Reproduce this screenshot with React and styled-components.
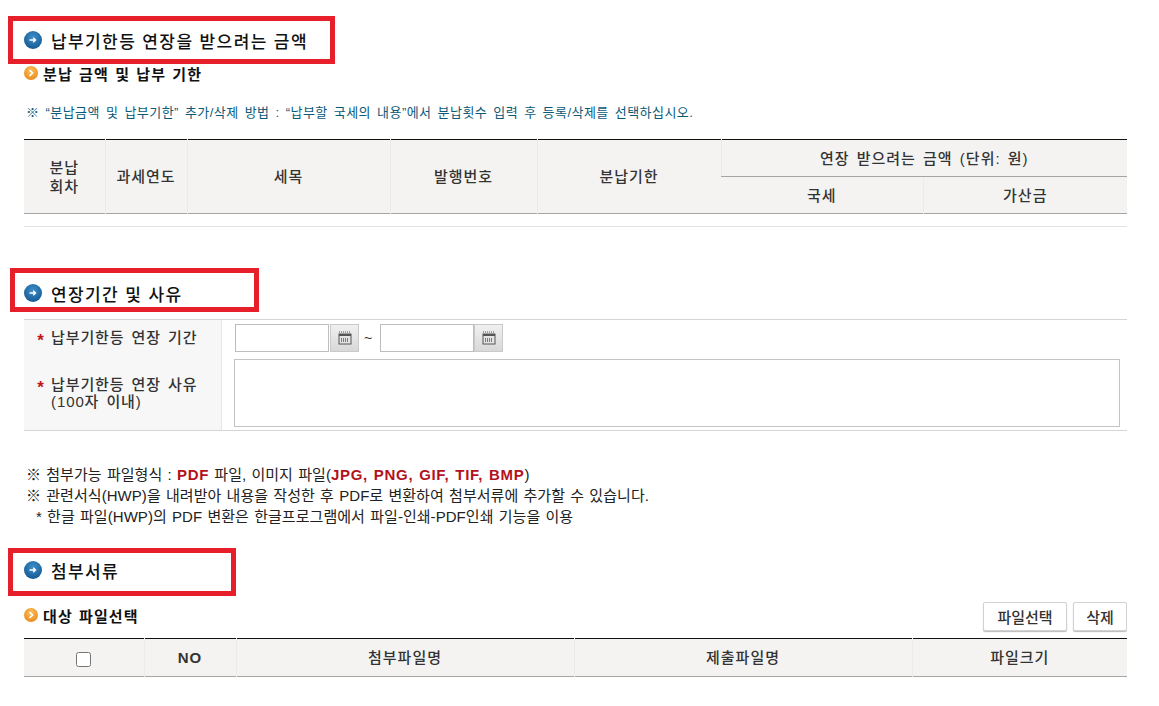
import React from 'react';
import styled, { createGlobalStyle } from 'styled-components';

const GlobalStyle = createGlobalStyle`
  html, body {
    margin: 0;
    padding: 0;
    background: #fff;
  }
  body {
    font-family: "Liberation Sans", "Noto Sans CJK KR", sans-serif;
    color: #222;
  }
`;

const Page = styled.div`
  width: 1103px;
  height: 706px;
  overflow: hidden;
  padding-left: 24px;
`;

const SectionTitle = styled.h2`
  position: relative;
  display: flex;
  align-items: center;
  gap: 9px;
  height: 24px;
  margin: ${props => props.$top}px 0 0;
  font-size: 17px;
  font-weight: 500;
  letter-spacing: 1.4px;
  color: #111;
  white-space: nowrap;
`;

const RedFrame = styled.span`
  position: absolute;
  left: ${props => props.$left}px;
  top: ${props => props.$top}px;
  width: ${props => props.$width}px;
  height: ${props => props.$height}px;
  box-sizing: border-box;
  border: 5px solid #e71f2b;
`;

const SubTitle = styled.h3`
  display: flex;
  align-items: center;
  gap: 5px;
  height: 20px;
  margin: ${props => props.$top || 0}px 0 0;
  font-size: 15px;
  font-weight: 700;
  letter-spacing: 1.1px;
  word-spacing: 1px;
  color: #111;
  white-space: nowrap;
`;

const Note = styled.p`
  margin: 21px 0 0 2px;
  font-size: 13px;
  line-height: 18px;
  letter-spacing: 0.45px;
  word-spacing: 2px;
  color: #0b5a78;
`;

const Grid = styled.table`
  width: 1103px;
  margin-top: ${props => props.$top}px;
  table-layout: fixed;
  border-collapse: collapse;
  border-top: 1px solid #111;
  border-bottom: 1px solid #a5a5a5;
`;

const HeadCell = styled.th`
  height: ${props => props.$height}px;
  padding: 0;
  background: #f4f3f1;
  border-left: 1px solid #ebebeb;
  border-bottom: ${props => (props.$divided ? '1px solid #a5a5a5' : '0')};
  font-size: 15px;
  font-weight: ${props => (props.$bold ? 700 : 500)};
  line-height: 19px;
  letter-spacing: 1px;
  word-spacing: 2px;
  color: #333;
  text-align: center;

  &:first-child {
    border-left: 0;
  }
`;

const Rule = styled.div`
  height: 1px;
  margin-top: 12px;
  background: #e3e3e3;
`;

const FormTable = styled.div`
  display: grid;
  grid-template-columns: 198px 1fr;
  margin-top: 14px;
  border-top: 1px solid #d5d5d5;
  border-bottom: 1px solid #d5d5d5;
`;

const LabelColumn = styled.div`
  display: flex;
  flex-direction: column;
  padding: 9px 0 0 13px;
  background: #f7f7f7;
  border-right: 1px solid #e6e6e6;
`;

const Label = styled.div`
  display: flex;
  gap: 6px;
  margin-top: ${props => props.$top || 0}px;
  font-size: 15px;
  font-weight: 500;
  line-height: 17px;
  letter-spacing: 0.9px;
  word-spacing: 2px;
  color: #333;
`;

const Star = styled.span`
  width: 8px;
  height: 17px;
  color: #c2161d;
  font-size: 17px;
  font-weight: 700;
  line-height: 24px;
  text-align: center;
`;

const FieldColumn = styled.div`
  display: flex;
  flex-direction: column;
  gap: 7px;
  padding: 4px 7px 3px 12px;
`;

const DateRow = styled.div`
  display: flex;
  align-items: center;
  padding-left: 1px;
`;

const DateInput = styled.input`
  width: 94px;
  height: 28px;
  box-sizing: border-box;
  border: 1px solid #bdbdbd;
  background: #fff;
`;

const CalendarButton = styled.button`
  display: flex;
  align-items: center;
  justify-content: center;
  width: 29px;
  height: 28px;
  margin-left: ${props => props.$flush ? 0 : 1}px;
  padding: 0;
  background: linear-gradient(#f0f0f0, #d8d8d8);
  border: 1px solid #c9c9c9;
`;

const Tilde = styled.span`
  width: 21px;
  box-sizing: border-box;
  padding-right: 3px;
  text-align: center;
  font-size: 14px;
  color: #333;
`;

const Reason = styled.textarea`
  display: block;
  width: 886px;
  height: 68px;
  box-sizing: border-box;
  border: 1px solid #c4c4c4;
  resize: none;
`;

const Notices = styled.div`
  margin: 33px 0 0 2px;
  font-size: 15px;
  line-height: 21px;
  letter-spacing: 0.05px;
  word-spacing: 1px;
  color: #222;
`;

const NoticeLine = styled.div`
  padding-left: ${props => props.$indent || 0}px;
`;

const Red = styled.b`
  font-weight: 700;
  letter-spacing: 0.7px;
  color: #b3121d;
`;

const ToolRow = styled.div`
  display: flex;
  align-items: flex-start;
  justify-content: space-between;
  margin-top: 20px;
`;

const ToolButtons = styled.div`
  display: flex;
  gap: 6px;
`;

const ToolButton = styled.button`
  width: ${props => props.$width}px;
  height: 29px;
  padding: 0;
  background: #fff;
  border: 1px solid #d2d2d2;
  border-radius: 2px;
  box-shadow: 0 1px 1px #bbb;
  font-family: inherit;
  font-size: 15px;
  font-weight: 500;
  color: #333;
`;

const CheckBox = styled.input`
  width: 15px;
  height: 15px;
  margin: 0;
  vertical-align: middle;
`;

const BlueBullet = () => (
  <svg width="18" height="18" viewBox="0 0 18 18">
    <defs>
      <radialGradient id="blueBall" cx="50%" cy="35%" r="65%">
        <stop offset="0%" stopColor="#3f8fc9" />
        <stop offset="100%" stopColor="#155a94" />
      </radialGradient>
    </defs>
    <circle cx="9" cy="9" r="9" fill="url(#blueBall)" />
    <path d="M5.5 9h6M9.2 6.8 11.5 9l-2.3 2.2" fill="none" stroke="#fff" strokeWidth="1.4" />
  </svg>
);

const OrangeBullet = () => (
  <svg width="14" height="14" viewBox="0 0 14 14">
    <defs>
      <radialGradient id="orangeBall" cx="50%" cy="35%" r="65%">
        <stop offset="0%" stopColor="#fbc35e" />
        <stop offset="100%" stopColor="#ea8a1d" />
      </radialGradient>
    </defs>
    <circle cx="7" cy="7" r="7" fill="url(#orangeBall)" />
    <path d="M5.5 4 8.5 7l-3 3" fill="none" stroke="#fff" strokeWidth="1.6" />
  </svg>
);

const CalendarIcon = () => (
  <svg width="14" height="14" viewBox="0 0 14 14">
    <path d="M1 1h12" stroke="#555" strokeWidth="1" strokeDasharray="1 1" />
    <rect x="1" y="3" width="12" height="10" fill="#e4e4e4" stroke="#555" />
    <rect x="1" y="3" width="12" height="2" fill="#555" />
    <path d="M3 8h8M3 10h8" stroke="#555" strokeWidth="1.4" strokeDasharray="1 1" />
  </svg>
);

const App = () => (
  <Page>
    <GlobalStyle />

    <SectionTitle $top={28}>
      <BlueBullet />
      납부기한등 연장을 받으려는 금액
      <RedFrame $left={-16} $top={-12} $width={327} $height={48} />
    </SectionTitle>
    <SubTitle $top={11}>
      <OrangeBullet />
      분납 금액 및 납부 기한
    </SubTitle>
    <Note>※ “분납금액 및 납부기한” 추가/삭제 방법 : “납부할 국세의 내용”에서 분납횟수 입력 후 등록/삭제를 선택하십시오.</Note>

    <Grid $top={17}>
      <colgroup>
        <col width="81" />
        <col width="82" />
        <col width="203" />
        <col width="147" />
        <col width="184" />
        <col width="202" />
        <col width="204" />
      </colgroup>
      <thead>
        <tr>
          <HeadCell rowSpan={2}>분납<br />회차</HeadCell>
          <HeadCell rowSpan={2}>과세연도</HeadCell>
          <HeadCell rowSpan={2}>세목</HeadCell>
          <HeadCell rowSpan={2}>발행번호</HeadCell>
          <HeadCell rowSpan={2}>분납기한</HeadCell>
          <HeadCell colSpan={2} $height={36} $divided>연장 받으려는 금액 (단위: 원)</HeadCell>
        </tr>
        <tr>
          <HeadCell $height={36}>국세</HeadCell>
          <HeadCell $height={36}>가산금</HeadCell>
        </tr>
      </thead>
    </Grid>
    <Rule />

    <SectionTitle $top={54}>
      <BlueBullet />
      연장기간 및 사유
      <RedFrame $left={-14} $top={-13} $width={249} $height={44} />
    </SectionTitle>
    <FormTable>
      <LabelColumn>
        <Label><Star>*</Star>납부기한등 연장 기간</Label>
        <Label $top={30}><Star>*</Star><span>납부기한등 연장 사유<br />(100자 이내)</span></Label>
      </LabelColumn>
      <FieldColumn>
        <DateRow>
          <DateInput />
          <CalendarButton><CalendarIcon /></CalendarButton>
          <Tilde>~</Tilde>
          <DateInput />
          <CalendarButton $flush><CalendarIcon /></CalendarButton>
        </DateRow>
        <Reason />
      </FieldColumn>
    </FormTable>

    <Notices>
      <NoticeLine>※ 첨부가능 파일형식 : <Red>PDF</Red> 파일, 이미지 파일(<Red>JPG, PNG, GIF, TIF, BMP</Red>)</NoticeLine>
      <NoticeLine>※ 관련서식(HWP)을 내려받아 내용을 작성한 후 PDF로 변환하여 첨부서류에 추가할 수 있습니다.</NoticeLine>
      <NoticeLine $indent={10}>* 한글 파일(HWP)의 PDF 변환은 한글프로그램에서 파일-인쇄-PDF인쇄 기능을 이용</NoticeLine>
    </Notices>

    <SectionTitle $top={31}>
      <BlueBullet />
      첨부서류
      <RedFrame $left={-16} $top={-10} $width={228} $height={48} />
    </SectionTitle>

    <ToolRow>
      <SubTitle $top={3}>
        <OrangeBullet />
        대상 파일선택
      </SubTitle>
      <ToolButtons>
        <ToolButton $width={84}>파일선택</ToolButton>
        <ToolButton $width={54}>삭제</ToolButton>
      </ToolButtons>
    </ToolRow>

    <Grid $top={7}>
      <colgroup>
        <col width="120" />
        <col width="92" />
        <col width="338" />
        <col width="338" />
        <col width="215" />
      </colgroup>
      <thead>
        <tr>
          <HeadCell $height={37}><CheckBox type="checkbox" /></HeadCell>
          <HeadCell $height={37} $bold>NO</HeadCell>
          <HeadCell $height={37}>첨부파일명</HeadCell>
          <HeadCell $height={37}>제출파일명</HeadCell>
          <HeadCell $height={37}>파일크기</HeadCell>
        </tr>
      </thead>
    </Grid>
  </Page>
);

export default App;
